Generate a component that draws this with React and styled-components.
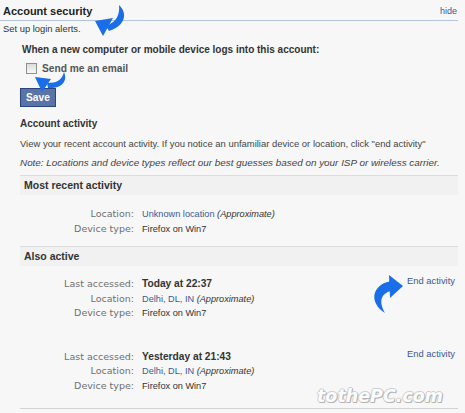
import React from "react";
import styled, { createGlobalStyle } from "styled-components";

const Global = createGlobalStyle`
  html, body { margin: 0; padding: 0; background: #f7f7f7; }
  body { font-family: "Liberation Sans", Arial, sans-serif; font-size: 9.2px; color: #333; }
`;

const Page = styled.div`
  position: relative;
  width: 465px;
  height: 413px;
  overflow: hidden;
  background: #f7f7f7;
`;

const TitleRow = styled.div`
  display: flex;
  justify-content: space-between;
  align-items: flex-end;
  width: 458px;
  height: 21px;
  border-bottom: 1px solid #b5c3e3;
  box-sizing: border-box;
  padding: 0 1px 2px 3px;
`;

const Title = styled.div`
  font-weight: bold;
  font-size: 11px;
  line-height: 13px;
  color: #222;
`;

const Link = styled.a`
  color: #3b5998;
  text-decoration: none;
  font-size: ${(p) => p.size || 9.4}px;
  line-height: 14px;
`;

const Intro = styled.div`
  margin-top: 1px;
  padding-left: 3px;
  line-height: 14px;
  font-size: 9.4px;
  color: #333;
`;

const Block = styled.div`
  padding-left: 20px;
`;

const Question = styled.div`
  margin-top: 7px;
  padding-left: 2px;
  font-weight: bold;
  font-size: 10px;
  line-height: 14px;
  color: #333;
`;

const CheckRow = styled.label`
  display: flex;
  align-items: center;
  gap: 5px;
  height: 14px;
  margin-top: 4px;
  padding-left: 6px;
  font-weight: bold;
  font-size: 10.2px;
  color: #555;
`;

const Box = styled.span`
  width: 9px;
  height: 9px;
  border: 1px solid #8f8f8f;
  background: linear-gradient(#dcdcdc, #f8f8f8);
`;

const SaveButton = styled.button`
  display: block;
  margin-top: 13px;
  height: 19px;
  padding: 0 5px;
  background: #5b74a8;
  border: 1px solid #29447e;
  color: #fff;
  font-family: inherit;
  font-weight: bold;
  font-size: 10.2px;
`;

const SubTitle = styled.div`
  margin-top: 10px;
  font-weight: bold;
  font-size: 10px;
  line-height: 14px;
  color: #333;
`;

const Para = styled.div`
  margin-top: ${(p) => p.mt}px;
  line-height: 14px;
  color: #444;
  font-size: ${(p) => (p.italic ? 9.9 : 9.45)}px;
  font-style: ${(p) => (p.italic ? "italic" : "normal")};
  white-space: nowrap;
`;

const SectionHead = styled.div`
  margin-top: ${(p) => p.mt || 0}px;
  width: 438px;
  height: 20px;
  border-top: 1px solid #dcdcdc;
  background: #f1f1f1;
  padding-left: 4px;
  box-sizing: border-box;
  font-weight: bold;
  font-size: 10.5px;
  line-height: 19px;
  color: #333;
`;

const Group = styled.div`
  display: flex;
  align-items: flex-start;
  width: 438px;
  box-sizing: border-box;
  padding: ${(p) => p.pad};
  border-bottom: ${(p) => (p.line ? "1px solid #d4d4d4" : "none")};
`;

const Details = styled.div`
  flex: 1;
  display: grid;
  grid-template-columns: 114px auto;
  column-gap: 8px;
  grid-auto-rows: ${(p) => p.row}px;
  line-height: ${(p) => p.row}px;
  align-items: baseline;
`;

const Label = styled.div`
  text-align: right;
  font-family: "DejaVu Sans", Verdana, sans-serif;
  font-size: 9.5px;
  color: #6f6f6f;
`;

const Value = styled.div`
  color: ${(p) => (p.blue ? "#3b5998" : "#333")};
  font-weight: ${(p) => (p.bold ? "bold" : "normal")};
  font-size: ${(p) => (p.bold ? 10.2 : 9.2)}px;
  & em { color: #333; }
`;

const EndLink = styled(Link)`
  margin-top: -3px;
  margin-right: 3px;
  line-height: 14.5px;
`;

const Arrow = styled.svg`
  position: absolute;
  left: 0;
  top: 0;
  pointer-events: none;
`;

const Watermark = styled.div`
  position: absolute;
  left: 317px;
  top: 386px;
  font-family: "DejaVu Sans", sans-serif;
  font-style: italic;
  font-weight: bold;
  font-size: 17.5px;
  line-height: 20px;
  color: #fbfbfb;
  text-shadow: 1px 1px 0 #b4b4b4, -1px 0 0 #cfcfcf, 0 -1px 0 #cfcfcf, 1px 0 0 #bcbcbc, 0 1px 0 #bcbcbc;
`;

const Rows = ({ items }) =>
  items.map(([l, v], i) => (
    <React.Fragment key={i}>
      <Label>{l}</Label>
      {v}
    </React.Fragment>
  ));

export default function App() {
  return (
    <Page>
      <Global />
      <TitleRow>
        <Title>Account security</Title>
        <Link size={9}>hide</Link>
      </TitleRow>
      <Intro>Set up login alerts.</Intro>
      <Block>
        <Question>When a new computer or mobile device logs into this account:</Question>
        <CheckRow>
          <Box />
          Send me an email
        </CheckRow>
        <SaveButton>Save</SaveButton>
        <SubTitle>Account activity</SubTitle>
        <Para mt={6}>View your recent account activity. If you notice an unfamiliar device or location, click "end activity"</Para>
        <Para italic mt={5}>Note: Locations and device types reflect our best guesses based on your ISP or wireless carrier.</Para>
        <SectionHead mt={5}>Most recent activity</SectionHead>
        <Group pad="11px 0 10px">
          <Details row={15}>
            <Rows
              items={[
                ["Location:", <Value blue>Unknown location <em>(Approximate)</em></Value>],
                ["Device type:", <Value>Firefox on Win7</Value>],
              ]}
            />
          </Details>
        </Group>
        <SectionHead>Also active</SectionHead>
        <Group pad="11px 0 14px">
          <Details row={14.5}>
            <Rows
              items={[
                ["Last accessed:", <Value bold>Today at 22:37</Value>],
                ["Location:", <Value blue>Delhi, DL, IN <em>(Approximate)</em></Value>],
                ["Device type:", <Value>Firefox on Win7</Value>],
              ]}
            />
          </Details>
          <EndLink>End activity</EndLink>
        </Group>
        <Group line pad="15px 0 15px">
          <Details row={14.5}>
            <Rows
              items={[
                ["Last accessed:", <Value bold>Yesterday at 21:43</Value>],
                ["Location:", <Value blue>Delhi, DL, IN <em>(Approximate)</em></Value>],
                ["Device type:", <Value>Firefox on Win7</Value>],
              ]}
            />
          </Details>
          <EndLink>End activity</EndLink>
        </Group>
      </Block>

      <Arrow width={465} height={413} viewBox="0 0 465 413">
        <g fill="#1a6ee8">
          <path d="M119 5 C127 12 127 25 109 31 L106 26 C117 22 120 14 119 5 Z" />
          <path d="M95 21 L113 18 L103 36 Z" />
          <path d="M64 72 C68 81 62 89 48 88 L47 83 C57 83 62 80 64 72 Z" />
          <path d="M35 77 L51 79 L42 92 Z" />
          <path d="M385 313 C369 303 371 285 391 281 L391 291 C380 294 379 302 385 313 Z" />
          <path d="M389 275 L403 286 L390 298 Z" />
        </g>
      </Arrow>
      <Watermark>tothePC.com</Watermark>
    </Page>
  );
}
